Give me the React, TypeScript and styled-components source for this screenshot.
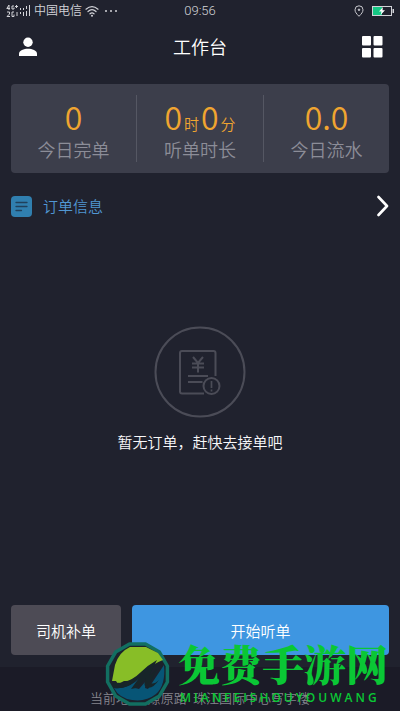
import React from 'react';
import styled, { createGlobalStyle } from 'styled-components';

const GlobalStyle = createGlobalStyle`
  * { box-sizing: border-box; }
  body {
    margin: 0;
    background: #20222e;
    font-family: Roboto, "Noto Sans CJK SC", sans-serif;
    font-weight: 350;
  }
  button { font: inherit; border: 0; padding: 0; cursor: pointer; }
  svg { display: block; flex: none; }
`;

const Page = styled.div`
  position: relative;
  display: flex;
  flex-direction: column;
  min-height: 100vh;
  background: #20222e;
  color: #fff;
  overflow: hidden;
`;

const StatusBar = styled.div`
  display: grid;
  grid-template-columns: 1fr auto 1fr;
  align-items: center;
  height: 22px;
  padding: 0 6px;
  font-size: 12px;
  line-height: 20px;
  color: #d2d3d8;
`;

const StatusGroup = styled.div<{ $end?: boolean }>`
  display: flex;
  align-items: center;
  gap: ${({ $end }) => ($end ? '8px' : '3px')};
  justify-content: ${({ $end }) => ($end ? 'flex-end' : 'flex-start')};
  white-space: nowrap;
`;

const Clock = styled.time`
  font-size: 13px;
`;

const Header = styled.header`
  display: grid;
  grid-template-columns: 1fr auto 1fr;
  align-items: center;
  height: 50px;
  padding: 0 16px;
`;

const Title = styled.h1`
  margin: 0;
  padding-top: 2px;
  font-size: 18px;
  line-height: 24px;
  font-weight: 350;
`;

const IconButton = styled.button<{ $end?: boolean }>`
  justify-self: ${({ $end }) => ($end ? 'end' : 'start')};
  background: none;
  color: #fff;
`;

const Stats = styled.section`
  display: grid;
  grid-template-columns: 125fr 127fr 126fr;
  margin: 12px 11px 0;
  padding: 11px 0;
  border-radius: 4px;
  background: #3c3e4b;
`;

const Stat = styled.div`
  display: flex;
  flex-direction: column;
  align-items: center;
  & + & { border-left: 1px solid #555763; }
`;

const StatValue = styled.div`
  display: flex;
  align-items: baseline;
  gap: 2px;
  height: 45px;
  font-family: "Noto Sans CJK SC", sans-serif;
  font-size: 32px;
  line-height: 42px;
  color: #f0a530;
`;

const Unit = styled.span`
  font-size: 15px;
  line-height: 20px;
`;

const StatLabel = styled.div`
  font-size: 18px;
  line-height: 22px;
  color: #8c8d98;
`;

const OrderLink = styled.a`
  display: flex;
  align-items: center;
  gap: 11px;
  margin: 21px 11px 0;
  height: 24px;
  color: #5197d3;
  font-size: 15px;
  line-height: 24px;
  text-decoration: none;
`;

const OrderText = styled.span`
  flex: 1;
  padding-top: 2px;
`;

const Empty = styled.main`
  flex: 1;
  display: flex;
  flex-direction: column;
  align-items: center;
  justify-content: center;
  gap: 13px;
  padding-bottom: 43px;
`;

const EmptyText = styled.p`
  margin: 0;
  font-size: 15px;
  line-height: 24px;
  color: #f8f8fa;
`;

const Actions = styled.div`
  display: grid;
  grid-template-columns: 110fr 257fr;
  gap: 11px;
  padding: 0 11px 12px;
`;

const ActionButton = styled.button<{ $primary?: boolean }>`
  height: 50px;
  border-radius: 4px;
  background: ${({ $primary }) => ($primary ? '#3e96e1' : '#4d4b55')};
  color: #fff;
  && { font-size: 15px; }
`;

const Footer = styled.footer`
  height: 44px;
  padding-top: 20px;
  background: #1b1b27;
  color: #85858e;
  font-size: 13px;
  line-height: 24px;
  text-align: center;
  white-space: pre;
`;

const Watermark = styled.div`
  position: absolute;
  right: 12px;
  bottom: 0;
  display: flex;
  align-items: center;
  gap: 7px;
  color: #0ac735;
  pointer-events: none;
`;

const WatermarkWords = styled.div`
  display: flex;
  flex-direction: column;
  height: 75px;
`;

const WatermarkName = styled.div`
  font-family: "Noto Serif CJK SC", "Noto Sans CJK SC", serif;
  font-size: 42px;
  line-height: 54px;
  font-weight: 900;
`;

const WatermarkLatin = styled.div`
  padding-left: 2px;
  font-family: "Open Sans", sans-serif;
  font-size: 12px;
  line-height: 16px;
  font-weight: 600;
  letter-spacing: 3px;
`;

const Signal = () => (
  <svg width="25" height="14" viewBox="0 0 25 14" aria-hidden="true">
    <g fill="none" stroke="#d2d3d8" strokeWidth="1">
      <path d="M3 1 .8 4.5H4M3 1v5M8 2H6v3h2V3.5M9 2.5h3M10.5 1v3" />
      <path d="M1 8h2.500v2L1 12.500h3M8 8H6v4.500h2V10.500" />
      <path d="M14.500 4v2M14.500 8v2M17.500 4v2M17.500 8v4M20.500 2v3M20.500 7v5M23.500 1v11" />
      <path d="M11 8v4" />
    </g>
  </svg>
);

const Wifi = () => (
  <svg width="14" height="12" viewBox="0 0 14 12" aria-hidden="true">
    <g fill="none" stroke="#d2d3d8" strokeWidth="1.200" strokeLinecap="round">
      <path d="M1 4.200Q7-1 13 4.200M3 6.500q4-3.600 8 0M5 8.800q2-1.800 4 0" />
    </g>
    <circle cx="7" cy="10.800" r="1" fill="#d2d3d8" />
  </svg>
);

const Dots = () => (
  <svg width="16" height="4" viewBox="0 0 16 4" fill="#d2d3d8" aria-hidden="true">
    <circle cx="4" cy="2" r="1" />
    <circle cx="9" cy="2" r="1" />
    <circle cx="14" cy="2" r="1" />
  </svg>
);

const Pin = () => (
  <svg width="10" height="12" viewBox="0 0 10 12" fill="none" stroke="#c8c9ce" aria-hidden="true">
    <path d="M5 11.300C2.500 8.800 1 7 1 4.800a4 4 0 0 1 8 0C9 7 7.500 8.800 5 11.300Z" />
    <circle cx="5" cy="4.800" r=".8" fill="#c8c9ce" />
  </svg>
);

const Battery = () => (
  <svg width="22" height="10" viewBox="0 0 22 10" aria-hidden="true">
    <rect x=".5" y=".5" width="19" height="9" fill="none" stroke="#d2d3d8" />
    <path d="M1 1h9v8H1z" fill="#16c784" />
    <path d="M20.500 3h1.500v4h-1.500z" fill="#d2d3d8" />
    <path d="m11 1-4 4.500h2.500L8.500 9l4.500-4.800h-2.500z" fill="#fff" />
  </svg>
);

const Person = () => (
  <svg width="24" height="20" viewBox="0 0 24 20" fill="currentColor" aria-hidden="true">
    <circle cx="12" cy="5.300" r="4.700" />
    <path d="M3 19v-2.300c0-3.200 5-5 9-5s9 1.800 9 5V19Z" />
  </svg>
);

const Tiles = () => (
  <svg width="24" height="22" viewBox="0 0 24 22" fill="currentColor" aria-hidden="true">
    <rect x="2" y="0" width="9" height="9.500" rx="1" />
    <rect x="13.500" y="0" width="9" height="9.500" rx="1" />
    <rect x="2" y="12" width="9" height="9.500" rx="1" />
    <rect x="13.500" y="12" width="9" height="9.500" rx="1" />
  </svg>
);

const Note = () => (
  <svg width="21" height="21" viewBox="0 0 21 21" aria-hidden="true">
    <rect width="21" height="21" rx="4" fill="#307faf" />
    <path d="M5 6.500h11M5 10.500h11M5 14.500h5.500" stroke="#20405b" strokeWidth="1.300" strokeLinecap="round" />
  </svg>
);

const Chevron = () => (
  <svg width="12" height="22" viewBox="0 0 12 22" fill="none" stroke="#fff" aria-hidden="true">
    <path d="m1.500 2 8.500 9-8.500 9" strokeWidth="2.600" strokeLinecap="round" strokeLinejoin="round" />
  </svg>
);

const EmptyBill = () => (
  <svg width="92" height="92" viewBox="0 0 92 92" fill="none" stroke="#4b4c57" aria-hidden="true">
    <circle cx="46" cy="46" r="44.500" strokeWidth="2" />
    <path d="M50 67.500H28q-2 0-2-2V27q0-2 2-2h31.500q2 0 2 2v23" strokeWidth="2" />
    <path d="m39 31 5 6 5-6M38 37.500h12M38 41.500h12M44 37v9.500" strokeWidth="2" />
    <path d="M34 50h20M34 56h14.500" strokeWidth="2" />
    <circle cx="57.500" cy="60" r="8" strokeWidth="2" />
    <path d="M57.500 55v7M57.500 63.500v2" strokeWidth="1.700" />
  </svg>
);

const Emblem = () => (
  <svg width="67" height="66" viewBox="0 0 67 66" aria-hidden="true">
    <path d="M63.400 41 55.400 54.900 41.500 62.900H25.500L11.600 54.900 3.600 41V25L11.600 11.100 25.500 3.100h16L55.400 11.100 63.400 25Z" fill="#1b222c" stroke="#126f61" strokeWidth="3.500" strokeLinejoin="round" />
    <path d="M8 40 11 24Q15 11 26 6H42L54 12 59 19Q48 23 37 33Q28 41 20 40L14 43 12 40Z" fill="#88be27" />
    <path d="M10 47Q22 48 31 41L43 30 31 47 35 48 42 40 41 47 44 48 60 24Q62 44 52 53Q42 61 28 59Q15 57 10 47Z" fill="#075576" />
    <path d="M8 43Q13 41 18 42Q29 39 37 31Q44 24 53 19Q48 29 45 35L53 28 46 42Q50 44 55 39Q48 49 42 46Q39 44 42 37L32 47 27 48 35 37Q23 49 10 47Z" fill="#172529" />
  </svg>
);

const stats = [
  { label: '今日完单', parts: [['0', '']] },
  { label: '听单时长', parts: [['0', '时'], ['0', '分']] },
  { label: '今日流水', parts: [['0.0', '']] },
];

export default function App() {
  return (
    <Page>
      <GlobalStyle />
      <StatusBar>
        <StatusGroup>
          <Signal />
          <span>中国电信</span>
          <Wifi />
          <Dots />
        </StatusGroup>
        <Clock>09:56</Clock>
        <StatusGroup $end>
          <Pin />
          <Battery />
        </StatusGroup>
      </StatusBar>
      <Header>
        <IconButton aria-label="个人中心"><Person /></IconButton>
        <Title>工作台</Title>
        <IconButton $end aria-label="菜单"><Tiles /></IconButton>
      </Header>
      <Stats>
        {stats.map(({ label, parts }) => (
          <Stat key={label}>
            <StatValue>
              {parts.map(([value, unit], i) => (
                <React.Fragment key={i}>
                  <span>{value}</span>
                  {unit && <Unit>{unit}</Unit>}
                </React.Fragment>
              ))}
            </StatValue>
            <StatLabel>{label}</StatLabel>
          </Stat>
        ))}
      </Stats>
      <OrderLink href="#orders">
        <Note />
        <OrderText>订单信息</OrderText>
        <Chevron />
      </OrderLink>
      <Empty>
        <EmptyBill />
        <EmptyText>暂无订单，赶快去接单吧</EmptyText>
      </Empty>
      <Actions>
        <ActionButton>司机补单</ActionButton>
        <ActionButton $primary>开始听单</ActionButton>
      </Actions>
      <Footer>当前地址: 燎原路  珠江国际中心写字楼</Footer>
      <Watermark>
        <Emblem />
        <WatermarkWords>
          <WatermarkName>免费手游网</WatermarkName>
          <WatermarkLatin>MIANFEISHOUYOUWANG</WatermarkLatin>
        </WatermarkWords>
      </Watermark>
    </Page>
  );
}
